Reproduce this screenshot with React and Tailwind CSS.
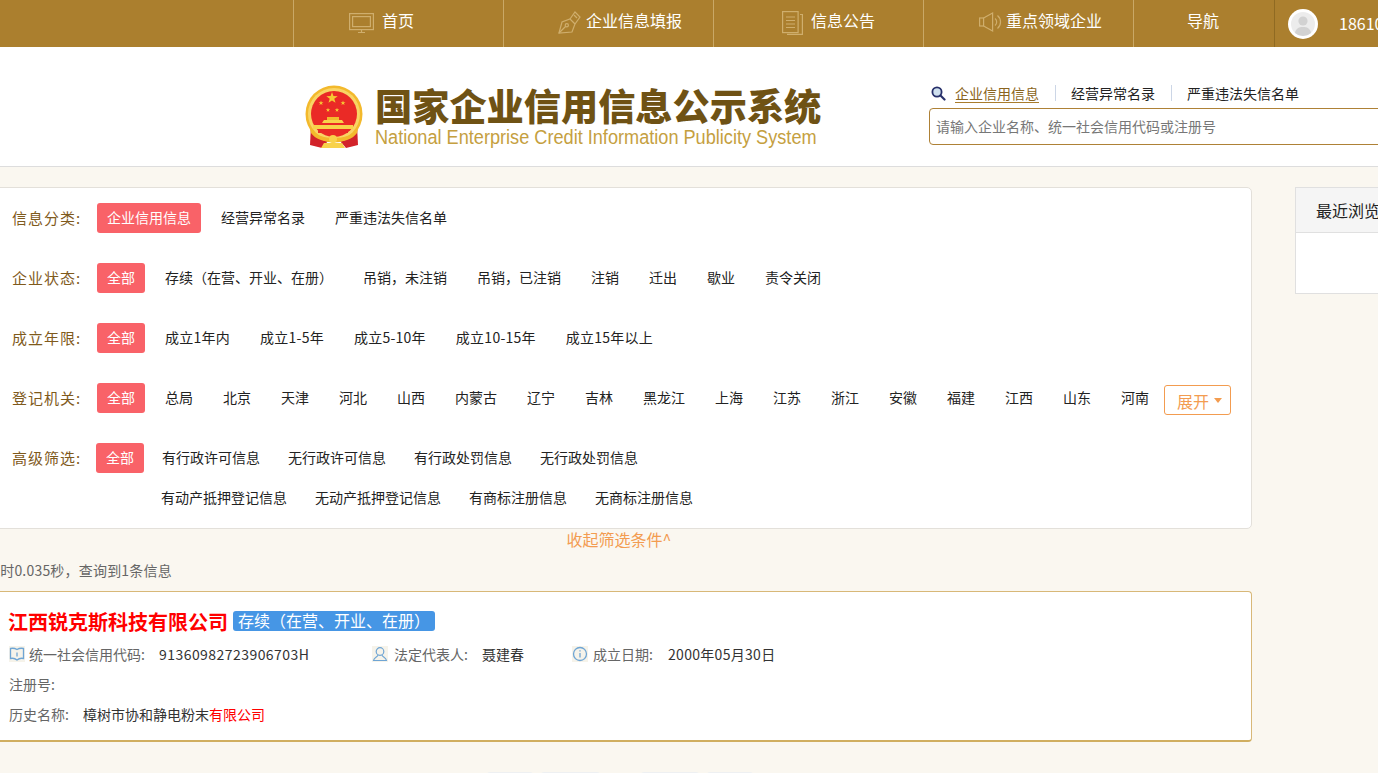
import React from "react";

const font = { fontFamily: '"Noto Sans CJK SC", "Noto Sans", sans-serif' };

const MonitorIcon = () => (
  <svg width="25" height="21" viewBox="0 0 25 21" fill="none" stroke="#cfae6d" strokeWidth="1.2">
    <rect x="0.6" y="0.6" width="23.8" height="16" />
    <rect x="3.6" y="3.6" width="17.8" height="10" />
    <path d="M9 19.5h7M12.5 17v2.5" />
  </svg>
);

const PenIcon = () => (
  <svg width="23" height="23" viewBox="0 0 23 23" fill="none" stroke="#cfae6d" strokeWidth="1.2" className="mb-[2px]">
    <path d="M1 22l3-11 8-3 5 5-3 8z" />
    <path d="M1 22l6.5-6.5" />
    <circle cx="8.8" cy="14.2" r="1.6" />
    <path d="M12 8l5-7 5 5-5 7" />
    <path d="M16 4l3 3" />
  </svg>
);

const DocIcon = () => (
  <svg width="21" height="24" viewBox="0 0 21 24" fill="none" stroke="#cfae6d" strokeWidth="1.2" className="mb-[2px]">
    <rect x="0.6" y="0.6" width="15.5" height="21" />
    <path d="M18 3.5h2.4V23.4H5" />
    <path d="M4 6h9M4 9.5h9M4 13h9M4 16.5h9" />
  </svg>
);

const SpeakerIcon = () => (
  <svg width="24" height="20" viewBox="0 0 24 20" fill="none" stroke="#cfae6d" strokeWidth="1.2" className="mb-[4px]">
    <rect x="0.6" y="6" width="4" height="8" />
    <path d="M4.6 6l9-5v18l-9-5" />
    <path d="M16 6.5a4.5 4.5 0 0 1 0 7" />
    <path d="M18.5 3.5a8.500 8.500 0 0 1 0 13" />
  </svg>
);

const Avatar = () => (
  <svg width="30" height="30" viewBox="0 0 30 30">
    <circle cx="15" cy="15" r="15" fill="#ffffff" />
    <circle cx="15" cy="15" r="12" fill="#ececec" />
    <circle cx="15" cy="12" r="4.6" fill="#d2d2d2" />
    <path d="M7 24c1-5 4-6 8-6s7 1 8 6a12 12 0 0 1-16 0z" fill="#d2d2d2" />
  </svg>
);

const Star = ({ x, y, r }) => {
  const pts = [];
  for (let i = 0; i < 10; i++) {
    const a = (Math.PI / 5) * i - Math.PI / 2;
    const rr = i % 2 === 0 ? r : r * 0.4;
    pts.push(`${x + rr * Math.cos(a)},${y + rr * Math.sin(a)}`);
  }
  return <polygon points={pts.join(" ")} fill="#f6c933" />;
};

const Emblem = () => (
  <svg width="60" height="64" viewBox="0 0 60 64" className="shrink-0">
    <path d="M7 40L6 60l12 3 6-7z" fill="#d2232a" />
    <path d="M53 40l1 20-12 3-6-7z" fill="#d2232a" />
    <circle cx="30" cy="29" r="28.500" fill="#f3b92c" />
    <circle cx="30" cy="29" r="26" fill="#f9d565" />
    <circle cx="30" cy="29" r="23" fill="#ea2a26" />
    <Star x={28} y={13} r={6} />
    <Star x={17} y={18} r={2.600} />
    <Star x={39} y={18} r={2.600} />
    <Star x={24} y={25} r={2.300} />
    <Star x={33} y={25} r={2.300} />
    <path d="M20 35h18l2 3H18z" fill="#f8d24a" />
    <path d="M23 32h12v3H23z" fill="#f3b92c" />
    <path d="M9 40h40v4H9z" fill="#f8d24a" />
    <path d="M14 44h30v4H14z" fill="#ea2a26" />
    <path d="M6 44c5 6 14 9 24 9s19-3 24-9l-1 4c-4 6-13 9-23 9S11 54 7 48z" fill="#f3b92c" />
    <path d="M20 58h18l3 5H17z" fill="#f8d24a" />
    <circle cx="29" cy="54" r="4" fill="#f8d24a" />
  </svg>
);

const SearchIcon = () => (
  <svg width="15" height="15" viewBox="0 0 15 15" fill="none">
    <circle cx="6" cy="6" r="4.600" fill="#cfe0ee" stroke="#27306a" strokeWidth="1.800" />
    <path d="M9.500 9.500l4 4" stroke="#27306a" strokeWidth="2.200" strokeLinecap="round" />
  </svg>
);

const BookIcon = () => (
  <svg width="16" height="16" viewBox="0 0 16 16" fill="none" stroke="#6fa5d4" strokeWidth="1.300" className="shrink-0 bg-[#f6f3ea]">
    <path d="M1.500 2.500c2-.5 4.500-.2 6.500 1 2-1.200 4.500-1.500 6.500-1v10c-2-.5-4.500-.2-6.500 1.500-2-1.700-4.500-2-6.500-1.500z" />
    <path d="M8 6.500v4" />
  </svg>
);

const UserIcon = () => (
  <svg width="16" height="16" viewBox="0 0 16 16" fill="none" stroke="#6fa5d4" strokeWidth="1.200" className="shrink-0 bg-[#f6f3ea]">
    <circle cx="8" cy="5.500" r="3.800" />
    <path d="M6 9c-.3 2-4 2-4.500 5.500h13C14 11 10.300 11 10 9" />
  </svg>
);

const InfoIcon = () => (
  <svg width="16" height="16" viewBox="0 0 16 16" fill="none" stroke="#6fa5d4" strokeWidth="1.300" className="shrink-0 bg-[#f6f3ea]">
    <circle cx="8" cy="8" r="6.500" />
    <path d="M8 7v4.500M8 4.300v1.200" />
  </svg>
);

const NavCell = ({ width, pad, icon, label, gap }) => (
  <div className={`flex h-full items-center border-l border-[#c9a866] text-base text-white ${width} ${pad} ${gap}`}>
    {icon}
    <span className="pb-[7px]">{label}</span>
  </div>
);

const Tag = ({ children }) => (
  <span className="flex h-[30px] shrink-0 items-center whitespace-nowrap rounded-[3px] bg-[#f96268] px-[10px] pb-[2px] text-white">{children}</span>
);

const Item = ({ children, wide }) => (
  <span className={`whitespace-nowrap px-[10px] pb-[2px] text-[#222] ${wide ? "tracking-[0.25px]" : ""}`}>{children}</span>
);

const FilterRow = ({ label, items, active, extra, wide }) => (
  <div className="mb-[30px] flex h-[30px] items-center">
    <span className="w-[85px] text-[15px] tracking-[1px] text-[#7f5a1c]">{label}</span>
    <div className="flex items-center gap-[10px]">
      <Tag>{active}</Tag>
      {items.map((t) => (
        <Item key={t} wide={wide}>{t}</Item>
      ))}
    </div>
    {extra}
  </div>
);

const areas = ["总局", "北京", "天津", "河北", "山西", "内蒙古", "辽宁", "吉林", "黑龙江", "上海", "江苏", "浙江", "安徽", "福建", "江西", "山东", "河南"];
const statuses = ["存续\uFF08在营、开业、在册\uFF09", "吊销\uFF0C未注销", "吊销\uFF0C已注销", "注销", "迁出", "歇业", "责令关闭"];

export default function App() {
  return (
    <div style={font} className="h-[773px] w-[1378px] overflow-hidden bg-[#faf7f0] text-sm">
      {/* top nav */}
      <div className="flex h-[47px] w-[1500px] bg-[#ab7f2e]">
        <div className="w-[293px]"></div>
        <NavCell width="w-[210px]" pad="pl-[55px]" gap="gap-2" icon={<MonitorIcon />} label="首页" />
        <NavCell width="w-[210px]" pad="pl-[54px]" gap="gap-[5px]" icon={<PenIcon />} label="企业信息填报" />
        <NavCell width="w-[210px]" pad="pl-[68px]" gap="gap-2" icon={<DocIcon />} label="信息公告" />
        <NavCell width="w-[210px]" pad="pl-[55px]" gap="gap-[3px]" icon={<SpeakerIcon />} label="重点领域企业" />
        <NavCell width="w-[141px]" pad="pl-[53px]" gap="gap-0" label="导航" />
        <div className="flex h-full items-center gap-[21px] border-l border-[#8f6a22] pl-[13px] text-base text-white">
          <Avatar />
          <span className="pb-[2px]">18610</span>
        </div>
      </div>

      {/* header */}
      <div className="flex h-[120px] w-[1500px] border-b border-[#dddddd] bg-white pl-[304px]">
        <div className="flex items-start pt-[38px]">
          <Emblem />
          <div className="ml-[11px] w-[447px]">
            <div className="whitespace-nowrap text-[37.2px] font-black leading-[40px] text-[#6f5214]">国家企业信用信息公示系统</div>
            <div className="mt-[1px] origin-left scale-x-[0.907] whitespace-nowrap text-[20px] leading-[22px] text-[#c5a03f]" style={{ fontFamily: '"Liberation Sans", sans-serif' }}>
              National Enterprise Credit Information Publicity System
            </div>
          </div>
        </div>
        <div className="ml-[107px] pt-[36px]">
          <div className="flex h-[20px] items-center leading-[20px] text-[#222]">
            <span className="ml-[2px] mr-[9px]"><SearchIcon /></span>
            <span className="border-b border-[#a97c2c] leading-[18px] text-[#8a6420]">企业信用信息</span>
            <span className="ml-[16px] mr-[15px] h-[16px] w-px bg-[#ccd6e6]"></span>
            <span>经营异常名录</span>
            <span className="ml-[16px] mr-[15px] h-[16px] w-px bg-[#ccd6e6]"></span>
            <span>严重违法失信名单</span>
          </div>
          <div className="mt-[5px] flex h-[37px] w-[520px] items-center rounded-[4px] border border-[#ae8136] pb-[2px] pl-[6px] text-[#777]">
            请输入企业名称、统一社会信用代码或注册号
          </div>
        </div>
      </div>

      {/* main */}
      <div className="flex w-[1500px] pt-[20px]">
        <div className="-ml-[14px] w-[1266px] shrink-0">
          <div className="rounded-[5px] border border-[#e3e0da] bg-white pb-[15px] pl-[25px] pt-[15px]">
            <FilterRow label="信息分类:" active="企业信用信息" items={["经营异常名录", "严重违法失信名单"]} />
            <FilterRow label="企业状态:" active="全部" items={statuses} />
            <FilterRow wide label="成立年限:" active="全部" items={["成立1年内", "成立1-5年", "成立5-10年", "成立10-15年", "成立15年以上"]} />
            <FilterRow
              label="登记机关:"
              active="全部"
              items={areas}
              extra={
                <span className="ml-[5px] mt-[4px] flex h-[30px] w-[67px] shrink-0 items-center rounded-[3px] border border-[#f39c50] pl-[12px] pt-[1px] text-base text-[#f39c50]">
                  展开
                  <span className="ml-[5px] h-0 w-0 border-x-4 border-t-[5px] border-x-transparent border-t-[#f39c50]"></span>
                </span>
              }
            />
            <div className="mb-[10px] flex h-[30px] items-center">
              <span className="w-[84px] text-[15px] tracking-[1px] text-[#7f5a1c]">高级筛选:</span>
              <Tag>全部</Tag>
              <div className="ml-[4px] flex">
                {["有行政许可信息", "无行政许可信息", "有行政处罚信息", "无行政处罚信息"].map((t) => (
                  <span key={t} className="px-[14px] pb-[2px] text-[#222]">{t}</span>
                ))}
              </div>
            </div>
            <div className="flex h-[30px] items-center pl-[135px]">
              {["有动产抵押登记信息", "无动产抵押登记信息", "有商标注册信息", "无商标注册信息"].map((t) => (
                <span key={t} className="px-[14px] pb-[2px] text-[#222]">{t}</span>
              ))}
            </div>
          </div>

          <div className="h-[22px] text-center text-base leading-[20px] text-[#f39c50]">收起筛选条件^</div>
          <div className="mt-[10px] h-[20px] tracking-[0.2px] leading-[18px] text-[#666]">{"耗时0.035秒\uFF0C查询到1条信息"}</div>

          {/* result card */}
          <div className="mt-[10px] h-[151px] rounded-[4px] border border-b-2 border-[#d8b878] border-b-[#d0ae60] bg-white pl-[22px] pt-[17px]">
            <div className="flex h-[24px] items-center">
              <span className="-ml-px pt-[2px] text-[20px] font-bold leading-[24px] text-[#ff0000]">江西锐克斯科技有限公司</span>
              <span className="ml-[5px] flex h-[20px] w-[202px] items-center rounded-[3px] bg-[#4696e5] pb-[3px] pl-[5px] text-base text-white">{"存续\uFF08在营、开业、在册\uFF09"}</span>
            </div>
            <div className="mt-[11px] flex h-[20px] items-center text-[#666]">
              <BookIcon />
              <span className="ml-[4px] w-[130px]">统一社会信用代码:</span>
              <span className="w-[213px] tracking-[0.45px] text-[#333]">91360982723906703H</span>
              <UserIcon />
              <span className="ml-[6px] w-[88px]">法定代表人:</span>
              <span className="w-[90px] text-[#333]">聂建春</span>
              <InfoIcon />
              <span className="ml-[5px] w-[75px]">成立日期:</span>
              <span className="tracking-[0.3px] text-[#333]">2000年05月30日</span>
            </div>
            <div className="mt-[10px] h-[20px] leading-[20px] text-[#666]">注册号:</div>
            <div className="mt-[10px] flex h-[20px] leading-[20px] text-[#666]">
              <span className="w-[74px]">历史名称:</span>
              <span className="text-[#333]">樟树市协和静电粉末<span className="text-[#ff0000]">有限公司</span></span>
            </div>
          </div>

          {/* pagination, mostly below the fold */}
          <div className="mt-[30px] flex pl-[501px]">
            <span className="mr-2 h-[30px] w-[46px] rounded-[3px] bg-[#eef0f2]"></span>
            <span className="mr-[41px] h-[30px] w-[59px] rounded-[3px] bg-[#eef0f2]"></span>
            <span className="mr-2 h-[30px] w-[58px] rounded-[3px] bg-[#eef0f2]"></span>
            <span className="h-[30px] w-[46px] rounded-[3px] bg-[#eef0f2]"></span>
          </div>
        </div>

        {/* recent views */}
        <div className="ml-[43px] h-[107px] w-[300px] border border-[#e0e0e0] bg-white">
          <div className="flex h-[45px] items-center border-b border-[#e0e0e0] bg-[#f5f5f5] pl-[20px] text-base text-[#222]">最近浏览</div>
        </div>
      </div>
    </div>
  );
}
